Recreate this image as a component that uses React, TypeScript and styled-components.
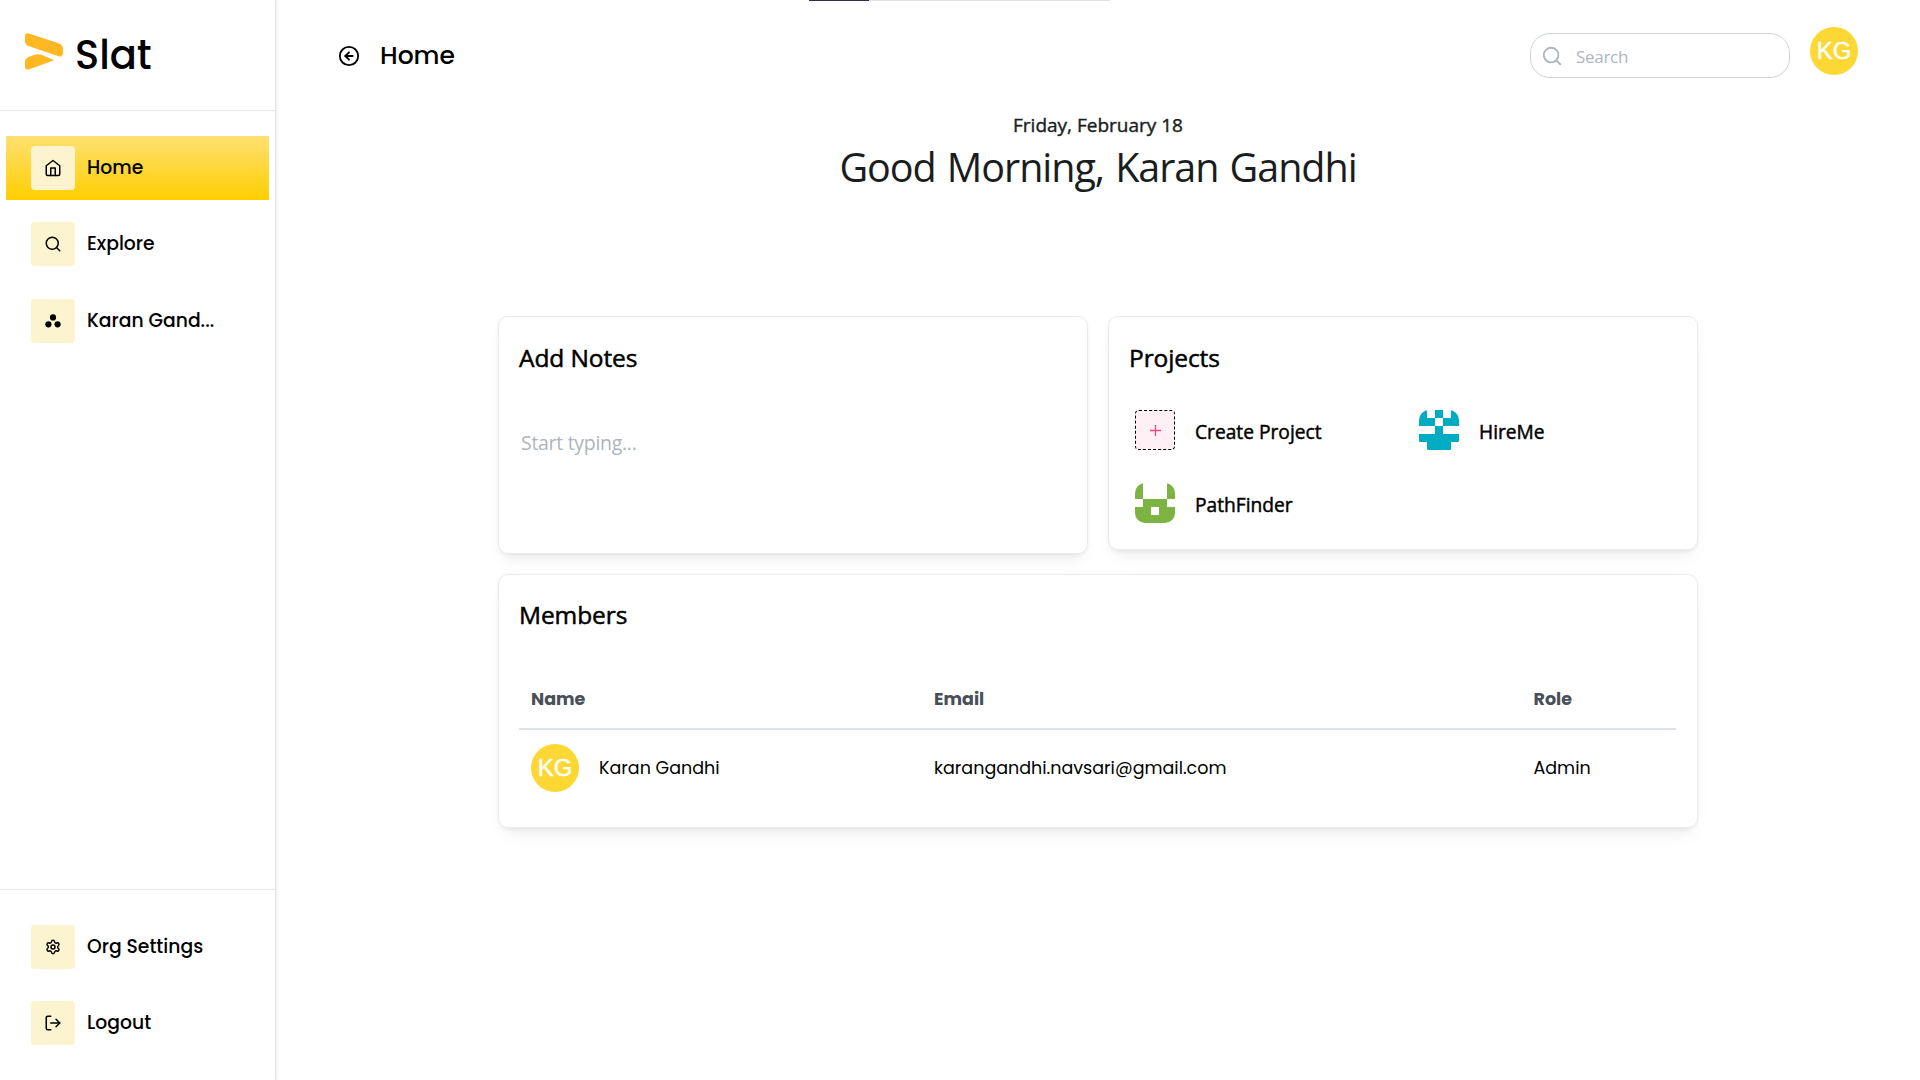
import React from "react";
import styled, { createGlobalStyle } from "styled-components";
import { FiArrowLeftCircle, FiHome, FiLogOut, FiSearch } from "react-icons/fi";
import { Settings } from "lucide-react";

const geometric = `Poppins, Inter, "Liberation Sans", sans-serif`;
const humanist = `"Segoe UI", "Open Sans", "Noto Sans", sans-serif`;

const GlobalStyle = createGlobalStyle`
  *, *::before, *::after { box-sizing: border-box; }
  body { margin: 0; background: #fff; color: #000; font-family: ${geometric}; }
`;

const Page = styled.div`
  display: flex;
  height: 1080px;
  overflow: hidden;
  position: relative;
`;

const LoadingBar = styled.div`
  position: absolute;
  top: 0;
  left: 809px;
  width: 301px;
  height: 1px;
  background: linear-gradient(to right, #322f4c 60px, #e3e3e3 60px);
`;

const Sidebar = styled.aside`
  display: flex;
  flex-direction: column;
  flex: none;
  width: 276px;
  border-right: 1px solid #e6e6e6;
  box-shadow: 1px 0 2px rgba(0, 0, 0, 0.08);
`;

const Brand = styled.div`
  display: flex;
  align-items: center;
  height: 111px;
  padding: 0 0 0 24px;
  gap: 11px;
  border-bottom: 1px solid #e8e8e8;
`;

const BrandName = styled.span`
  font-size: 40px;
  line-height: 60px;
  font-weight: 500;
`;

const Nav = styled.nav<{ $bottom?: boolean }>`
  display: flex;
  flex-direction: column;
  gap: 12.4px;
  padding: 25px 6px;
  ${(p) => p.$bottom && "gap: 12px; margin-top: auto; border-top: 1px solid #e8e8e8;"}
`;

const NavItem = styled.a<{ $active?: boolean }>`
  display: flex;
  align-items: center;
  gap: 12px;
  height: 64px;
  padding: 0 25px;
  font-size: 18.75px;
  font-weight: 500;
  background: ${(p) => (p.$active ? "linear-gradient(#ffe072, #ffce00)" : "none")};
`;

const IconTile = styled.span`
  display: flex;
  align-items: center;
  justify-content: center;
  width: 44px;
  height: 44px;
  border-radius: 4px;
  background: #fcf3cf;
`;

const NavLabel = styled.span`
  padding-bottom: 1px;
  white-space: nowrap;
`;

const Main = styled.main`
  flex: 1;
  display: flex;
  flex-direction: column;
`;

const TopBar = styled.header`
  display: flex;
  align-items: center;
  height: 111px;
  padding: 0 62px;
`;

const PageTitle = styled.h1`
  margin: 0 auto 0 20px;
  font-size: 25px;
  font-weight: 500;
`;

const SearchBox = styled.label`
  display: flex;
  align-items: center;
  gap: 13px;
  width: 260px;
  height: 45px;
  padding: 0 10px;
  border: 1px solid #ced4da;
  border-radius: 20px;
  color: #adb5bd;
`;

const SearchInput = styled.input`
  width: 180px;
  padding: 2px 0 0;
  border: 0;
  outline: 0;
  background: none;
  font-family: ${humanist};
  font-size: 17px;
  letter-spacing: -0.3px;
  &::placeholder { color: #adb5bd; opacity: 1; }
`;

const Avatar = styled.span`
  display: flex;
  align-items: center;
  justify-content: center;
  flex: none;
  width: 48px;
  height: 48px;
  border-radius: 50%;
  background: #fdd835;
  color: #fff;
  font: 24px "Liberation Sans", Arial, sans-serif;
  -webkit-text-stroke: 0.4px #fff;
`;

const HeaderAvatar = styled(Avatar)`
  margin: 0 0 9px 20px;
`;

const Greeting = styled.section`
  display: flex;
  flex-direction: column;
  align-items: center;
  height: 205px;
  color: #1a1d1e;
  font-family: ${humanist};
`;

const DateLine = styled.div`
  font-size: 19px;
  line-height: 28px;
  -webkit-text-stroke: 0.4px currentColor;
`;

const Welcome = styled.div`
  font-size: 39.5px;
  line-height: 57px;
  letter-spacing: -1.05px;
  word-spacing: 2px;
`;

const Board = styled.div`
  display: grid;
  grid-template-columns: 590px 590px;
  column-gap: 20px;
  row-gap: 20px;
  align-items: start;
  align-self: center;
`;

const Card = styled.section<{ $height: number; $wide?: boolean }>`
  height: ${(p) => p.$height}px;
  padding: ${(p) => (p.$wide ? 19 : 20)}px 20px;
  grid-column: ${(p) => (p.$wide ? "1 / -1" : "auto")};
  border: 1px solid #e9ecef;
  border-radius: 10px;
  background: #fff;
  box-shadow: 0 1px 4px rgba(0, 0, 0, 0.05), 0 12px 19px -6px rgba(0, 0, 0, 0.05),
    0 9px 9px -6px rgba(0, 0, 0, 0.04);
`;

const CardTitle = styled.h2`
  margin: 0;
  font-family: ${humanist};
  font-size: 24.5px;
  line-height: 42px;
  font-weight: 400;
  letter-spacing: -0.1px;
  -webkit-text-stroke: 0.5px currentColor;
`;

const NotesInput = styled.textarea`
  display: block;
  width: 100%;
  height: 120px;
  margin-top: 48px;
  padding: 0 2px;
  border: 0;
  outline: 0;
  resize: none;
  background: none;
  font-family: ${humanist};
  font-size: 19.5px;
  line-height: 31px;
  letter-spacing: -0.3px;
  &::placeholder { color: #adb5bd; opacity: 1; }
`;

const ProjectGrid = styled.div`
  display: grid;
  grid-template-columns: 284px 1fr;
  row-gap: 33px;
  padding: 31px 0 0 6px;
`;

const Project = styled.div`
  display: flex;
  align-items: center;
  gap: 20px;
  height: 40px;
`;

const ProjectName = styled.span`
  padding-top: 2px;
  font-family: ${humanist};
  font-size: 19.2px;
  -webkit-text-stroke: 0.45px currentColor;
`;

const CreateTile = styled.span`
  display: flex;
  align-items: center;
  justify-content: center;
  width: 40px;
  height: 40px;
  border: 1px dashed #000;
  border-radius: 4px;
  background: #fff0f6;
`;

const IdenticonSvg = styled.svg`
  width: 40px;
  height: 40px;
  border-radius: 10px;
`;

const Table = styled.div`
  display: grid;
  grid-template-columns: 403px 599.500px 1fr;
  margin: 37px 1px 0 0;
  font-size: 17.5px;
`;

const HeadCell = styled.div`
  display: flex;
  align-items: center;
  height: 57px;
  padding: 0 12px 4px;
  border-bottom: 2px solid #dee2e6;
  color: #495057;
  font-weight: 700;
`;

const Cell = styled.div`
  display: flex;
  align-items: center;
  gap: 20px;
  height: 77px;
  padding: 0 12px 1px;
  white-space: nowrap;
`;

const LogoSvg = styled.svg`
  flex: none;
  margin-bottom: 9px;
`;

const Logo = () => (
  <LogoSvg width="40" height="40" viewBox="24 30 40 40" fill="#ffb822">
    <path d="M25 35Q25 31.500 28.700 32.400L58 42Q63 43.800 63 48V51.500Q63 56.500 58.500 55.200L28.500 45Q25 43.500 25 40Z" />
    <path d="M25 61Q25 57.700 28 56.300L34 54Q38 52.500 42 54L54 59.200L29.500 68.200Q25 69.500 25 66Z" />
  </LogoSvg>
);

const Dots = () => (
  <svg width="16" height="14" viewBox="0 0 16 14">
    <circle cx="8" cy="3.400" r="3.100" />
    <circle cx="3.400" cy="10.300" r="3.100" />
    <circle cx="12.600" cy="10.300" r="3.100" />
  </svg>
);

const Plus = () => (
  <svg width="11" height="11" viewBox="0 0 11 11" stroke="#e64980" strokeWidth="1.300">
    <path d="M5.500 0V11M0 5.500H11" />
  </svg>
);

const Identicon = ({ rows, color }: { rows: string[]; color: string }) => (
  <IdenticonSvg viewBox="0 0 5 5" fill={color} shapeRendering="crispEdges">
    {rows.flatMap((row, y) =>
      [...row].map((c, x) => c === "x" && <rect key={`${x}${y}`} x={x} y={y} width="1" height="1" />)
    )}
  </IdenticonSvg>
);

type LinkItem = { label: string; icon: React.ReactNode; active?: boolean };

const mainLinks: LinkItem[] = [
  { label: "Home", icon: <FiHome size={18} />, active: true },
  { label: "Explore", icon: <FiSearch size={18} /> },
  { label: "Karan Gand...", icon: <Dots /> },
];

const footLinks: LinkItem[] = [
  { label: "Org Settings", icon: <Settings size={16} strokeWidth={2.2} /> },
  { label: "Logout", icon: <FiLogOut size={18} /> },
];

const links = (items: LinkItem[]) =>
  items.map((item) => (
    <NavItem key={item.label} $active={item.active}>
      <IconTile>{item.icon}</IconTile>
      <NavLabel>{item.label}</NavLabel>
    </NavItem>
  ));

export default function App() {
  return (
    <Page>
      <GlobalStyle />
      <LoadingBar />
      <Sidebar>
        <Brand>
          <Logo />
          <BrandName>Slat</BrandName>
        </Brand>
        <Nav>{links(mainLinks)}</Nav>
        <Nav $bottom>{links(footLinks)}</Nav>
      </Sidebar>
      <Main>
        <TopBar>
          <FiArrowLeftCircle size={22} />
          <PageTitle>Home</PageTitle>
          <SearchBox>
            <FiSearch size={22} />
            <SearchInput placeholder="Search" />
          </SearchBox>
          <HeaderAvatar>KG</HeaderAvatar>
        </TopBar>
        <Greeting>
          <DateLine>Friday, February 18</DateLine>
          <Welcome>Good Morning, Karan Gandhi</Welcome>
        </Greeting>
        <Board>
          <Card $height={238}>
            <CardTitle>Add Notes</CardTitle>
            <NotesInput placeholder="Start typing..." />
          </Card>
          <Card $height={234}>
            <CardTitle>Projects</CardTitle>
            <ProjectGrid>
              <Project>
                <CreateTile><Plus /></CreateTile>
                <ProjectName>Create Project</ProjectName>
              </Project>
              <Project>
                <Identicon color="#00acc1" rows={["x.x.x", "xx.xx", "..x..", "xxxxx", ".xxx."]} />
                <ProjectName>HireMe</ProjectName>
              </Project>
              <Project>
                <Identicon color="#7cb342" rows={["x...x", "x...x", ".xxx.", "xx.xx", "xxxxx"]} />
                <ProjectName>PathFinder</ProjectName>
              </Project>
            </ProjectGrid>
          </Card>
          <Card $height={254} $wide>
            <CardTitle>Members</CardTitle>
            <Table>
              <HeadCell>Name</HeadCell>
              <HeadCell>Email</HeadCell>
              <HeadCell>Role</HeadCell>
              <Cell><Avatar>KG</Avatar>Karan Gandhi</Cell>
              <Cell>karangandhi.navsari@gmail.com</Cell>
              <Cell>Admin</Cell>
            </Table>
          </Card>
        </Board>
      </Main>
    </Page>
  );
}
